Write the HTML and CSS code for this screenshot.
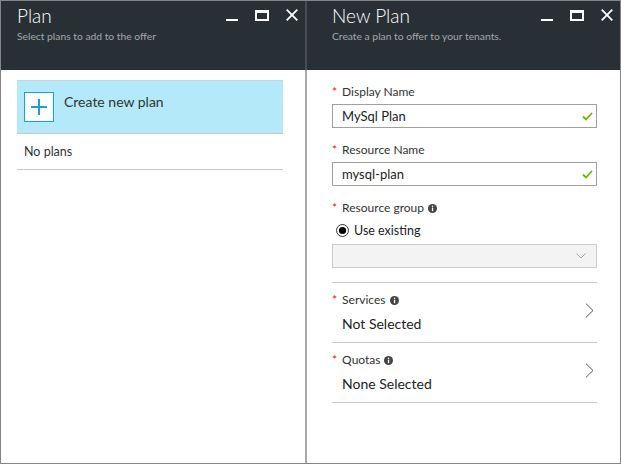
FILE: index.html
```html
<!DOCTYPE html>
<html>
<head>
<meta charset="utf-8">
<link rel="stylesheet" href="styles.css">
</head>
<body>
<div class="frame">
  <section class="panel panel-left">
    <header class="head">
      <div class="head-text">
        <h1 class="title">Plan</h1>
        <p class="subtitle">Select plans to add to the offer</p>
      </div>
      <div class="controls">
        <svg class="ic-min" width="12" height="12" viewBox="0 0 12 12"><rect x="0" y="10" width="12" height="2" fill="#fff"/></svg>
        <svg class="ic-max" width="14" height="12" viewBox="0 0 14 12"><path d="M0 1h14v11H0z M2 4v6h10V4z" fill="#fff" fill-rule="evenodd"/></svg>
        <svg class="ic-close" width="12" height="12" viewBox="0 0 12 12"><path d="M0.7 0.7L11.3 11.3M11.3 0.7L0.7 11.3" stroke="#fff" stroke-width="1.8"/></svg>
      </div>
    </header>
    <div class="body-left">
      <div class="create-row">
        <div class="plus-box">
          <svg width="18" height="18" viewBox="0 0 18 18"><path d="M9 1v16M1 9h16" stroke="#1a9fde" stroke-width="2"/></svg>
        </div>
        <span class="create-text">Create new plan</span>
      </div>
      <div class="noplans">No plans</div>
    </div>
  </section>
  <div class="divider"></div>
  <section class="panel panel-right">
    <header class="head">
      <div class="head-text">
        <h1 class="title">New Plan</h1>
        <p class="subtitle">Create a plan to offer to your tenants.</p>
      </div>
      <div class="controls">
        <svg class="ic-min" width="12" height="12" viewBox="0 0 12 12"><rect x="0" y="10" width="12" height="2" fill="#fff"/></svg>
        <svg class="ic-max" width="14" height="12" viewBox="0 0 14 12"><path d="M0 1h14v11H0z M2 4v6h10V4z" fill="#fff" fill-rule="evenodd"/></svg>
        <svg class="ic-close" width="12" height="12" viewBox="0 0 12 12"><path d="M0.7 0.7L11.3 11.3M11.3 0.7L0.7 11.3" stroke="#fff" stroke-width="1.8"/></svg>
      </div>
    </header>
    <div class="form">
      <div class="field">
        <div class="label"><span class="star">*</span>Display Name</div>
        <div class="input"><span>MySql Plan</span>
          <svg width="11" height="9" viewBox="0 0 11 9"><path d="M1 4.5l3 3 6-6.5" stroke="#6bb700" stroke-width="1.8" fill="none"/></svg>
        </div>
      </div>
      <div class="field">
        <div class="label"><span class="star">*</span>Resource Name</div>
        <div class="input"><span>mysql-plan</span>
          <svg width="11" height="9" viewBox="0 0 11 9"><path d="M1 4.5l3 3 6-6.5" stroke="#6bb700" stroke-width="1.8" fill="none"/></svg>
        </div>
      </div>
      <div class="field field-group">
        <div class="label"><span class="star">*</span>Resource group
          <svg class="info" width="9" height="9" viewBox="0 0 9 9"><circle cx="4.5" cy="4.5" r="4.5" fill="#444"/><rect x="3.9" y="3.6" width="1.3" height="3.6" fill="#fff"/><rect x="3.9" y="1.7" width="1.3" height="1.3" fill="#fff"/></svg>
        </div>
        <div class="radio-row">
          <svg width="13" height="13" viewBox="0 0 13 13"><circle cx="6.5" cy="6.5" r="6" fill="#fff" stroke="#333" stroke-width="1"/><circle cx="6.5" cy="6.5" r="3.6" fill="#000"/></svg>
          <span>Use existing</span>
        </div>
        <div class="select">
          <svg width="10" height="6" viewBox="0 0 10 6"><path d="M0.5 0.5l4.5 4.5 4.5-4.5" stroke="#a8a8a8" stroke-width="1" fill="none"/></svg>
        </div>
      </div>
      <div class="section">
        <div class="section-text">
          <div class="label"><span class="star">*</span>Services
            <svg class="info" width="9" height="9" viewBox="0 0 9 9"><circle cx="4.5" cy="4.5" r="4.5" fill="#444"/><rect x="3.9" y="3.6" width="1.3" height="3.6" fill="#fff"/><rect x="3.9" y="1.7" width="1.3" height="1.3" fill="#fff"/></svg>
          </div>
          <div class="value">Not Selected</div>
        </div>
        <svg class="chev" width="9" height="15" viewBox="0 0 9 15"><path d="M1 0.7l7 6.8-7 6.8" stroke="#555" stroke-width="1"  fill="none"/></svg>
      </div>
      <div class="section">
        <div class="section-text">
          <div class="label"><span class="star">*</span>Quotas
            <svg class="info" width="9" height="9" viewBox="0 0 9 9"><circle cx="4.5" cy="4.5" r="4.5" fill="#444"/><rect x="3.9" y="3.6" width="1.3" height="3.6" fill="#fff"/><rect x="3.9" y="1.7" width="1.3" height="1.3" fill="#fff"/></svg>
          </div>
          <div class="value">None Selected</div>
        </div>
        <svg class="chev" width="9" height="15" viewBox="0 0 9 15"><path d="M1 0.7l7 6.8-7 6.8" stroke="#555" stroke-width="1" fill="none"/></svg>
      </div>
    </div>
  </section>
</div>
</body>
</html>
```

FILE: styles.css
```css
* { box-sizing: border-box; }
html, body { margin: 0; padding: 0; background: #fff; }
body { font-family: "Lato", "Open Sans", sans-serif; color: #333; }

.frame {
  width: 621px;
  height: 464px;
  border: 1px solid #858585;
  display: flex;
  overflow: hidden;
}

.panel { display: flex; flex-direction: column; }
.panel-left { width: 304px; }
.panel-right { flex: 1; }

.divider {
  width: 2px;
  background: linear-gradient(#484e53 0, #484e53 69px, #a9a9a9 69px);
}

.head {
  height: 69px;
  background: #293035;
  display: flex;
  justify-content: space-between;
  padding: 3px 7px 0 16px;
}
.panel-right .head { padding-left: 25px; }

.title {
  margin: 0;
  font-size: 19px;
  font-weight: 300;
  line-height: 24px;
  color: #fff;
}
.subtitle {
  margin: 2px 0 0;
  font-size: 10.3px;
  line-height: 13px;
  color: #a2a7ab;
}

.controls {
  display: flex;
  gap: 17px;
  margin-top: 5px;
  height: 12px;
}

.body-left { padding: 10px 22px 0 16px; }

.create-row {
  height: 54px;
  background: #b3e9f8;
  border-top: 1px solid #c9d6db;
  border-bottom: 1px solid #c8c8c8;
  display: flex;
  align-items: flex-start;
  padding: 11px 0 0 7px;
}
.plus-box {
  width: 30px;
  height: 30px;
  border: 1px solid #1a9fde;
  background: #fff;
  display: flex;
  align-items: center;
  justify-content: center;
}
.create-text {
  margin-left: 10px;
  font-size: 14px;
  line-height: 18px;
  margin-top: 1px;
  color: #333;
}

.noplans {
  height: 36px;
  border-bottom: 1px solid #c8c8c8;
  padding: 10px 0 0 7px;
  font-size: 12.5px;
  line-height: 16px;
  color: #333;
}

.form { padding: 14px 23px 0 25px; }

.field { margin-bottom: 14px; }
.field-group { margin-bottom: 0; padding-bottom: 14px; border-bottom: 1px solid #c8c8c8; }

.label {
  font-size: 12px;
  line-height: 16px;
  color: #333;
  display: flex;
  align-items: center;
}
.star { color: #e81123; margin-right: 5px; font-size: 12px; }
.info { margin-left: 4px; }

.input {
  margin-top: 4px;
  height: 24px;
  border: 1px solid #a0a0a0;
  display: flex;
  align-items: center;
  justify-content: space-between;
  padding: 0 3px 0 9px;
  font-size: 13px;
  color: #222;
}

.radio-row {
  display: flex;
  align-items: center;
  gap: 5px;
  margin-top: 7px;
  padding-left: 4px;
  height: 15px;
  font-size: 12.5px;
  color: #222;
}

.select {
  margin-top: 6px;
  height: 24px;
  border: 1px solid #cccccc;
  background: #f3f3f3;
  display: flex;
  align-items: center;
  justify-content: flex-end;
  padding-right: 10px;
}

.section {
  display: flex;
  justify-content: space-between;
  align-items: flex-start;
  padding: 9px 3px 6px 0;
  border-bottom: 1px solid #c8c8c8;
}
.value {
  margin-top: 4px;
  padding-left: 10px;
  font-size: 14px;
  line-height: 24px;
  color: #222;
}
.chev { margin-top: 11px; }
```
